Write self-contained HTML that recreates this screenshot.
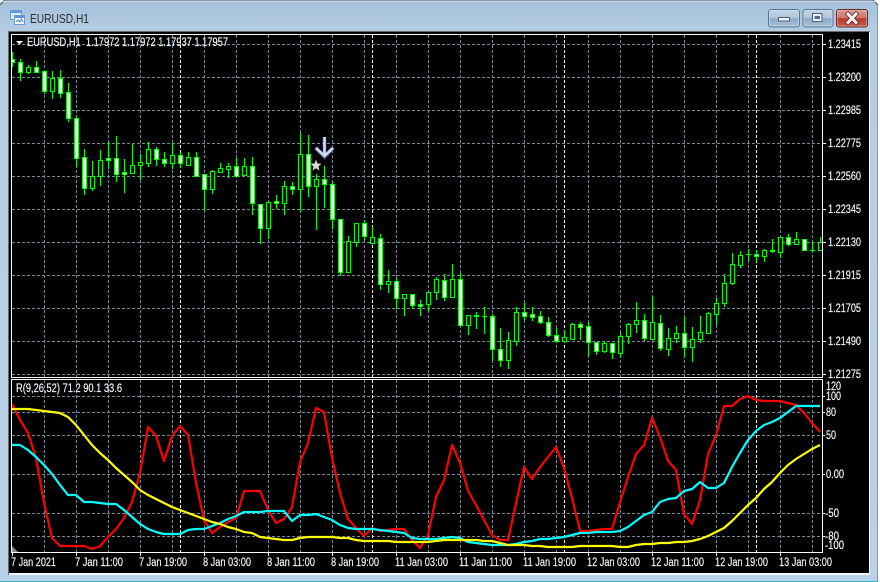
<!DOCTYPE html>
<html><head><meta charset="utf-8"><title>EURUSD,H1</title>
<style>
html,body{margin:0;padding:0;background:#fff;width:880px;height:582px;overflow:hidden}
svg{display:block}
text{font-family:"Liberation Sans",sans-serif;font-size:11.5px;fill:#f2f5f8;stroke:#f2f5f8;stroke-width:.18px}
</style></head><body>
<svg width="880" height="582" viewBox="0 0 880 582" xmlns="http://www.w3.org/2000/svg">
<defs>
<linearGradient id="tb" x1="0" y1="0" x2="0" y2="1"><stop offset="0" stop-color="#a5c1da"/><stop offset="0.02" stop-color="#a9c4dd"/><stop offset="0.055" stop-color="#b6cee4"/><stop offset="1" stop-color="#b9d1ea"/></linearGradient>
<linearGradient id="btn" x1="0" y1="0" x2="0" y2="1"><stop offset="0" stop-color="#c3d4e6"/><stop offset="0.48" stop-color="#b0c5dc"/><stop offset="0.52" stop-color="#8fa9c6"/><stop offset="1" stop-color="#a9c2dc"/></linearGradient>
<linearGradient id="cls" x1="0" y1="0" x2="0" y2="1"><stop offset="0" stop-color="#dba199"/><stop offset="0.48" stop-color="#cf7166"/><stop offset="0.52" stop-color="#b9392a"/><stop offset="1" stop-color="#c8604f"/></linearGradient>
<clipPath id="cm"><rect x="12" y="35" width="810" height="342"/></clipPath>
<clipPath id="ci"><rect x="12" y="380" width="810" height="172"/></clipPath>
</defs>

<rect width="880" height="582" fill="#fff"/>
<path d="M5 0H873Q877 0 877 5V581H0V5Q0 0 5 0Z" fill="url(#tb)"/>
<path d="M5 .5H873" stroke="#8a9aa8" fill="none"/>
<path d="M0 5L5 0" stroke="#555" fill="none"/>
<path d="M873 0L878 5" stroke="#555" fill="none"/>
<rect x="1" y="1" width="875" height="1" fill="#c5d8e8"/>
<rect x="0" y="581" width="878" height="1" fill="#3fb4c4"/>
<rect x="877" y="5" width="1" height="577" fill="#3fb4c4"/>

<!-- title -->
<g shape-rendering="crispEdges">
<rect x="10.500" y="10.500" width="11" height="9" fill="#dfeafa" stroke="#6d9ad0"/>
<rect x="11" y="11" width="10" height="2" fill="#5f96dc"/>
<rect x="14.500" y="15.500" width="10" height="9" fill="#fff" stroke="#6d9ad0"/>
<rect x="15" y="16" width="9" height="2" fill="#5f96dc"/>
</g>
<path d="M16 22l2-2 1.500 2 2-3 1.500 3" stroke="#4a7fb8" fill="none"/>
<text x="30" y="23" textLength="59" lengthAdjust="spacingAndGlyphs" style="font-size:12.500px;fill:#2b2b36;stroke:none">EURUSD,H1</text>

<!-- buttons -->
<rect x="768.500" y="9.500" width="31" height="17.500" rx="2.500" fill="url(#btn)" stroke="#5a7290"/>
<rect x="769.500" y="10.500" width="29" height="15.500" rx="1.500" fill="none" stroke="#d5e2ef" stroke-opacity=".6"/>
<rect x="778.500" y="17.500" width="11" height="3.500" fill="#eef2f6" stroke="#4d6078" stroke-width="1"/>
<rect x="803" y="9.500" width="30" height="17.500" rx="2.500" fill="url(#btn)" stroke="#5a7290"/>
<rect x="804" y="10.500" width="28" height="15.500" rx="1.500" fill="none" stroke="#d5e2ef" stroke-opacity=".6"/>
<rect x="812.500" y="13.500" width="9.500" height="8" fill="#eef2f6" stroke="#4d6078"/>
<rect x="814.500" y="16" width="5.500" height="3" fill="#5c6f88"/>
<rect x="836.500" y="9.500" width="31" height="17.500" rx="2.500" fill="url(#cls)" stroke="#6a2a25"/>
<rect x="837.500" y="10.500" width="29" height="15.500" rx="1.500" fill="none" stroke="#e9bdb5" stroke-opacity=".55"/>
<path d="M848 14L856 22.500M856 14L848 22.500" stroke="#5c2420" stroke-width="4.500" stroke-linecap="square"/>
<path d="M848 14L856 22.500M856 14L848 22.500" stroke="#f4f1ef" stroke-width="3" stroke-linecap="square"/>

<!-- client area -->
<rect x="8" y="31" width="862" height="544" fill="#6a6a6a"/>
<rect x="869" y="32" width="1" height="543" fill="#fff"/>
<rect x="9" y="573" width="861" height="2" fill="#f2f2f2"/>
<rect x="9" y="32" width="860" height="541" fill="#000"/>

<g shape-rendering="crispEdges">
<!-- grid -->
<g clip-path="url(#cm)">
<path stroke="#778899" stroke-dasharray="3 2" fill="none" d="M12 44.500H822M12 77.500H822M12 110.500H822M12 143.500H822M12 176.500H822M12 209.500H822M12 242.500H822M12 275.500H822M12 308.500H822M12 341.500H822M12 374.500H822"/>
<path stroke="#778899" stroke-dasharray="3 2" fill="none" d="M44.500 35V377M76.500 35V377M108.500 35V377M140.500 35V377M172.500 35V377M204.500 35V377M236.500 35V377M268.500 35V377M300.500 35V377M332.500 35V377M364.500 35V377M396.500 35V377M428.500 35V377M460.500 35V377M492.500 35V377M524.500 35V377M556.500 35V377M588.500 35V377M620.500 35V377M652.500 35V377M684.500 35V377M716.500 35V377M748.500 35V377M780.500 35V377M812.500 35V377"/>
<path stroke="#fff" stroke-dasharray="3 2" fill="none" d="M180.500 35V377M372.500 35V377M564.500 35V377M756.500 35V377"/>

<!-- wicks -->
<path stroke="#00ff00" fill="none" d="M12.500 52V67M20.500 59V81M28.500 65V74M36.500 61V73M44.500 70V94M52.500 71V99M60.500 70V98M68.500 83V122M76.500 116V167M84.500 149V195M92.500 161V191M100.500 150V186M108.500 142V169M116.500 136V182M124.500 159V193M132.500 144V174M140.500 154V180M148.500 142V167M156.500 147V166M164.500 152V167M172.500 143V169M180.500 152V168M188.500 152V165M196.500 152V177M204.500 174V211M212.500 170V194M220.500 163V173M228.500 163V178M236.500 158V177M244.500 158V176M252.500 157V215M260.500 204V244M268.500 201V239M276.500 195V209M284.500 181V215M292.500 182V195M300.500 133V212M308.500 135V197M316.500 174V230M324.500 166V208M332.500 182V229M340.500 219V276M348.500 236V272M356.500 223V247M364.500 220V240M372.500 227V244M380.500 234V290M388.500 270V293M396.500 278V309M404.500 295V316M412.500 294V309M420.500 300V316M428.500 292V311M436.500 277V300M444.500 274V301M452.500 264V297M460.500 273V325M468.500 315V335M476.500 312V329M484.500 307V334M492.500 314V361M500.500 328V367M508.500 332V369M516.500 307V346M524.500 303V320M532.500 307V321M540.500 311V324M548.500 317V337M556.500 328V343M564.500 330V343M572.500 323V339M580.500 322V340M588.500 322V356M596.500 342V355M604.500 341V353M612.500 343V359M620.500 333V357M628.500 323V344M636.500 302V333M644.500 314V341M652.500 296V339M660.500 315V351M668.500 328V356M676.500 326V343M684.500 317V357M692.500 327V362M700.500 316V343M708.500 312V334M716.500 298V325M724.500 274V307M732.500 253V285M740.500 251V268M748.500 249V261M756.500 250V262M764.500 249V262M772.500 239V253M780.500 237V258M788.500 234V246M796.500 232V244M804.500 239V251M812.500 242V252M820.500 237V251"/>
<!-- line-shaped bodies -->
<path stroke="#00ff00" fill="none" d="M746 254.500H751M810 250.500H815M482 316.500H487"/>
<!-- hollow bodies -->
<path stroke="#00ff00" fill="#000" d="M26.500 67.500h4v5h-4zM50.500 78.500h4v13h-4zM90.500 176.500h4v12h-4zM98.500 160.500h4v16h-4zM130.500 165.500h4v8h-4zM138.500 162.500h4v3h-4zM146.500 149.500h4v14h-4zM170.500 155.500h4v8h-4zM186.500 157.500h4v8h-4zM210.500 171.500h4v18h-4zM218.500 168.500h4v4h-4zM226.500 166.500h4v3h-4zM242.500 166.500h4v9h-4zM266.500 202.500h4v26h-4zM282.500 186.500h4v17h-4zM298.500 154.500h4v35h-4zM314.500 179.500h4v7h-4zM346.500 241.500h4v31h-4zM354.500 223.500h4v19h-4zM370.500 237.500h4v6h-4zM386.500 281.500h4v3h-4zM402.500 294.500h4v4h-4zM426.500 292.500h4v12h-4zM434.500 279.500h4v13h-4zM450.500 279.500h4v18h-4zM466.500 315.500h4v10h-4zM506.500 340.500h4v20h-4zM514.500 312.500h4v29h-4zM562.500 337.500h4v4h-4zM570.500 324.500h4v15h-4zM602.500 343.500h4v8h-4zM618.500 336.500h4v17h-4zM626.500 324.500h4v12h-4zM634.500 320.500h4v4h-4zM650.500 322.500h4v17h-4zM666.500 338.500h4v11h-4zM674.500 333.500h4v5h-4zM690.500 339.500h4v8h-4zM698.500 332.500h4v7h-4zM706.500 313.500h4v20h-4zM714.500 303.500h4v11h-4zM722.500 283.500h4v20h-4zM730.500 264.500h4v19h-4zM738.500 255.500h4v10h-4zM762.500 250.500h4v6h-4zM778.500 237.500h4v15h-4zM794.500 239.500h4v5h-4zM818.500 242.500h4v8h-4z"/>
<!-- filled bodies -->
<path stroke="#00ff00" fill="#fff" d="M10.500 59.500h4v3h-4zM18.500 62.500h4v10h-4zM34.500 67.500h4v5h-4zM42.500 71.500h4v20h-4zM58.500 78.500h4v15h-4zM66.500 92.500h4v26h-4zM74.500 118.500h4v40h-4zM82.500 157.500h4v31h-4zM106.500 158.500h4v2h-4zM114.500 158.500h4v16h-4zM122.500 172.500h4v2h-4zM154.500 149.500h4v10h-4zM162.500 159.500h4v4h-4zM178.500 155.500h4v8h-4zM194.500 157.500h4v19h-4zM202.500 174.500h4v15h-4zM234.500 166.500h4v10h-4zM250.500 166.500h4v37h-4zM258.500 204.500h4v24h-4zM274.500 201.500h4v2h-4zM290.500 186.500h4v3h-4zM306.500 154.500h4v32h-4zM322.500 179.500h4v5h-4zM330.500 184.500h4v35h-4zM338.500 219.500h4v53h-4zM362.500 223.500h4v13h-4zM378.500 238.500h4v46h-4zM394.500 281.500h4v17h-4zM410.500 294.500h4v11h-4zM418.500 304.500h4v2h-4zM442.500 280.500h4v17h-4zM458.500 279.500h4v46h-4zM474.500 315.500h4v1h-4zM490.500 316.500h4v33h-4zM498.500 349.500h4v11h-4zM522.500 312.500h4v4h-4zM530.500 314.500h4v3h-4zM538.500 316.500h4v6h-4zM546.500 322.500h4v13h-4zM554.500 335.500h4v6h-4zM578.500 324.500h4v3h-4zM586.500 326.500h4v16h-4zM594.500 342.500h4v9h-4zM610.500 343.500h4v9h-4zM642.500 320.500h4v18h-4zM658.500 323.500h4v25h-4zM682.500 333.500h4v14h-4zM754.500 254.500h4v2h-4zM770.500 250.500h4v1h-4zM786.500 237.500h4v7h-4zM802.500 239.500h4v11h-4z"/>
</g>

<!-- indicator grid -->
<g clip-path="url(#ci)">
<path stroke="#778899" stroke-dasharray="3 2" fill="none" d="M12 396.500H822M12 412.500H822M12 435.500H822M12 474.500H822M12 513.500H822M12 536.500H822"/>
<path stroke="#778899" stroke-dasharray="3 2" fill="none" d="M44.500 380V552M76.500 380V552M108.500 380V552M140.500 380V552M172.500 380V552M204.500 380V552M236.500 380V552M268.500 380V552M300.500 380V552M332.500 380V552M364.500 380V552M396.500 380V552M428.500 380V552M460.500 380V552M492.500 380V552M524.500 380V552M556.500 380V552M588.500 380V552M620.500 380V552M652.500 380V552M684.500 380V552M716.500 380V552M748.500 380V552M780.500 380V552M812.500 380V552"/>
<path stroke="#fff" stroke-dasharray="3 2" fill="none" d="M180.500 380V552M372.500 380V552M564.500 380V552M756.500 380V552"/>
</g>

<!-- frames -->
<path stroke="#fff" fill="none" d="M11.500 34.500H822.500V377.500H11.500ZM11.500 379.500H822.500V552.500H11.500Z"/>
<!-- ticks -->
<path stroke="#fff" fill="none" d="M823 44.500h3M823 77.500h3M823 110.500h3M823 143.500h3M823 176.500h3M823 209.500h3M823 242.500h3M823 275.500h3M823 308.500h3M823 341.500h3M823 374.500h3M823 396.500h2M823 412.500h2M823 435.500h2M823 474.500h2M823 513.500h2M823 536.500h2M12.500 553v3M76.500 553v3M140.500 553v3M204.500 553v3M268.500 553v3M332.500 553v3M396.500 553v3M460.500 553v3M524.500 553v3M588.500 553v3M652.500 553v3M716.500 553v3M780.500 553v3"/>
</g>

<!-- indicator lines -->
<g clip-path="url(#ci)" fill="none" stroke-width="2.200" stroke-linejoin="round">
<polyline stroke="#ff0000" points="12,404 20,420 28,433 36,458 44,503 52,538 60,546 68,546 76,546 84,546 92,549 100,546 108,537 116,529 124,518 132,502 140,473 148,427 156,436 164,461 172,436 180,426 188,435 196,483 204,520 212,533 220,527 228,522 236,518 244,491 252,491 260,491 268,510 276,523 284,519 292,507 300,462 308,443 316,408 324,412 332,458 340,493 348,519 356,528 364,536 372,528 380,531 388,530 396,529 404,529 412,540 420,548 428,535 436,497 444,480 452,445 460,463 468,491 476,505 484,520 492,535 500,540 508,540 516,503 524,467 532,479 540,467 548,457 556,447 564,468 572,498 580,531 588,531 596,530 604,529 612,529 620,502 628,477 636,454 644,445 652,418 660,437 668,461 676,470 684,514 692,524 700,500 708,454 716,435 724,406 732,406 740,399 748,396 756,400 764,401 772,401 780,401 788,403 796,405 804,413 812,423 820,432"/>
<polyline stroke="#00ffff" points="12,445 20,445 28,450 36,457 44,465 52,474 60,485 68,495 76,495 84,502 92,502 100,503 108,504 116,504 124,510 132,517 140,524 148,529 156,532 164,534 172,534 180,534 188,530 196,529 204,529 212,526 220,523 228,519 236,516 244,512 252,512 260,512 268,511 276,511 284,511 292,521 300,515 308,515 316,514 324,517 332,520 340,525 348,528 356,529 364,529 372,529 380,530 388,531 396,532 404,533 412,538 420,539 428,539 436,539 444,538 452,537 460,538 468,542 476,543 484,544 492,545 500,545 508,545 516,544 524,542 532,541 540,539 548,539 556,538 564,537 572,535 580,533 588,533 596,532 604,532 612,532 620,531 628,527 636,521 644,515 652,512 660,502 668,499 676,498 684,491 692,489 700,482 708,488 716,488 724,483 732,467 740,453 748,440 756,431 764,425 772,422 780,418 788,412 796,406 804,406 812,406 820,406"/>
<polyline stroke="#ffff00" points="12,409 20,409 28,409 36,410 44,411 52,412 60,413 68,417 76,425 84,435 92,445 100,453 108,460 116,468 124,475 132,482 140,490 148,495 156,499 164,503 172,507 180,510 188,513 196,516 204,519 212,522 220,524 228,527 236,529 244,532 252,533 260,537 268,538 276,539 284,540 292,540 300,538 308,537 316,537 324,537 332,537 340,538 348,538 356,540 364,541 372,541 380,541 388,541 396,542 404,542 412,542 420,542 428,542 436,541 444,540 452,540 460,540 468,540 476,540 484,541 492,541 500,543 508,545 516,545 524,545 532,546 540,546 548,547 556,547 564,547 572,547 580,546 588,546 596,546 604,546 612,546 620,547 628,547 636,545 644,544 652,544 660,543 668,543 676,542 684,542 692,541 700,539 708,536 716,532 724,528 732,521 740,513 748,505 756,498 764,489 772,482 780,473 788,465 796,459 804,454 812,449 820,445"/>
</g>
<polygon points="12,546 18,552 12,552" fill="#8a8a8a"/>

<!-- arrow and star -->
<g fill="none" stroke-linecap="butt">
<path d="M324.500 137V156M315.500 147.500L324.500 157L333.500 147.500" stroke="#2c4a86" stroke-width="4"/>
<path d="M324.500 137V155M316 148L324.500 156L333 148" stroke="#d6dcea" stroke-width="2.600"/>
</g>
<polygon points="316,159.500 317.500,163.500 321.500,163.800 318.500,166.400 319.500,170.500 316,168.300 312.500,170.500 313.500,166.400 310.500,163.800 314.500,163.500" fill="#d8d8d8"/>

<!-- legends -->
<polygon points="16,41 23,41 19.500,44.500" fill="#fff"/>
<text x="27" y="46" textLength="201" lengthAdjust="spacingAndGlyphs" xml:space="preserve">EURUSD,H1  1.17972 1.17972 1.17937 1.17957</text>
<text x="16" y="392" textLength="106" lengthAdjust="spacingAndGlyphs">R(9,26,52) 71.2 90.1 33.6</text>

<!-- price labels -->
<text x="828" y="48" textLength="33" lengthAdjust="spacingAndGlyphs">1.23415</text>
<text x="828" y="81" textLength="33" lengthAdjust="spacingAndGlyphs">1.23200</text>
<text x="828" y="114" textLength="33" lengthAdjust="spacingAndGlyphs">1.22985</text>
<text x="828" y="147" textLength="33" lengthAdjust="spacingAndGlyphs">1.22775</text>
<text x="828" y="180" textLength="33" lengthAdjust="spacingAndGlyphs">1.22560</text>
<text x="828" y="213" textLength="33" lengthAdjust="spacingAndGlyphs">1.22345</text>
<text x="828" y="246" textLength="33" lengthAdjust="spacingAndGlyphs">1.22130</text>
<text x="828" y="279" textLength="33" lengthAdjust="spacingAndGlyphs">1.21915</text>
<text x="828" y="312" textLength="33" lengthAdjust="spacingAndGlyphs">1.21705</text>
<text x="828" y="345" textLength="33" lengthAdjust="spacingAndGlyphs">1.21490</text>
<text x="828" y="378" textLength="33" lengthAdjust="spacingAndGlyphs">1.21275</text>

<text x="826" y="390" textLength="15" lengthAdjust="spacingAndGlyphs">120</text>
<text x="826" y="400" textLength="15" lengthAdjust="spacingAndGlyphs">100</text>
<text x="826" y="416" textLength="10" lengthAdjust="spacingAndGlyphs">80</text>
<text x="826" y="439" textLength="10" lengthAdjust="spacingAndGlyphs">50</text>
<text x="826" y="478" textLength="18" lengthAdjust="spacingAndGlyphs">0.00</text>
<text x="825" y="517" textLength="14" lengthAdjust="spacingAndGlyphs">-50</text>
<text x="825" y="540" textLength="14" lengthAdjust="spacingAndGlyphs">-80</text>
<text x="825" y="549" textLength="19" lengthAdjust="spacingAndGlyphs">-100</text>

<!-- date labels -->
<text x="11" y="566" textLength="45" lengthAdjust="spacingAndGlyphs">7 Jan 2021</text>
<text x="75" y="566" textLength="48" lengthAdjust="spacingAndGlyphs">7 Jan 11:00</text>
<text x="139" y="566" textLength="48" lengthAdjust="spacingAndGlyphs">7 Jan 19:00</text>
<text x="203" y="566" textLength="48" lengthAdjust="spacingAndGlyphs">8 Jan 03:00</text>
<text x="267" y="566" textLength="48" lengthAdjust="spacingAndGlyphs">8 Jan 11:00</text>
<text x="331" y="566" textLength="48" lengthAdjust="spacingAndGlyphs">8 Jan 19:00</text>
<text x="395" y="566" textLength="53" lengthAdjust="spacingAndGlyphs">11 Jan 03:00</text>
<text x="459" y="566" textLength="53" lengthAdjust="spacingAndGlyphs">11 Jan 11:00</text>
<text x="523" y="566" textLength="53" lengthAdjust="spacingAndGlyphs">11 Jan 19:00</text>
<text x="587" y="566" textLength="53" lengthAdjust="spacingAndGlyphs">12 Jan 03:00</text>
<text x="651" y="566" textLength="53" lengthAdjust="spacingAndGlyphs">12 Jan 11:00</text>
<text x="715" y="566" textLength="53" lengthAdjust="spacingAndGlyphs">12 Jan 19:00</text>
<text x="779" y="566" textLength="53" lengthAdjust="spacingAndGlyphs">13 Jan 03:00</text>
</svg>
</body></html>
